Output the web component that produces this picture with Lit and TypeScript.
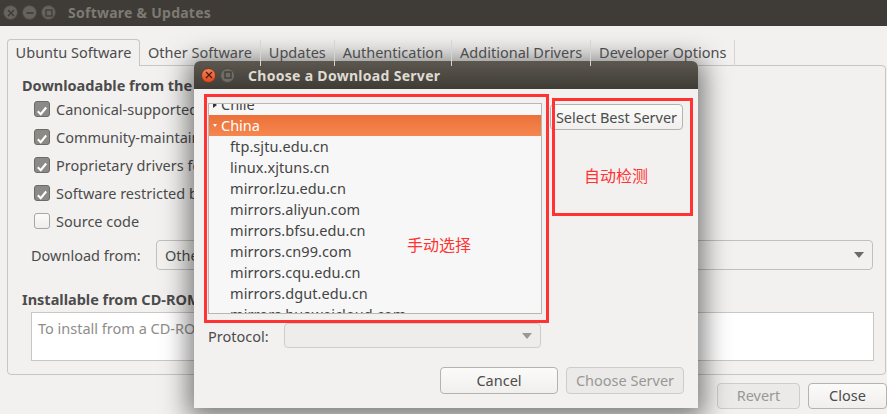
import { LitElement, html, css, svg } from "lit";
import { customElement } from "lit/decorators.js";

const CHECK = svg`<svg viewBox="0 0 16 16" width="14" height="14"><path d="M3.2 8.4 L6.5 11.6 L12.8 4" fill="none" stroke="#fff" stroke-width="2.4"/></svg>`;
const ARROW = svg`<svg viewBox="0 0 10 6" width="10" height="6"><path d="M0 0H10L5 6Z" fill="currentColor"/></svg>`;

const wbtn = (kind: string, glyph: unknown) => html`<span class="wb ${kind}">${glyph}</span>`;
const X = svg`<svg viewBox="0 0 8 8" width="8" height="8"><path d="M1 1L7 7M7 1L1 7" stroke="currentColor" stroke-width="1.2"/></svg>`;
const MIN = svg`<svg viewBox="0 0 8 8" width="8" height="8"><path d="M0.5 4H7.5" stroke="currentColor" stroke-width="1.5"/></svg>`;
const MAX = svg`<svg viewBox="0 0 8 8" width="8" height="8"><rect x="1" y="1" width="6" height="6" fill="none" stroke="currentColor" stroke-width="1.2"/></svg>`;

const CHECKS: [string, boolean][] = [
  ["Canonical-supported free and open-source software (main)", true],
  ["Community-maintained free and open-source software (universe)", true],
  ["Proprietary drivers for devices (restricted)", true],
  ["Software restricted by copyright or legal issues (multiverse)", true],
  ["Source code", false],
];
const TABS = ["Other Software", "Updates", "Authentication", "Additional Drivers", "Developer Options"];
const MIRRORS = [
  "ftp.sjtu.edu.cn", "linux.xjtuns.cn", "mirror.lzu.edu.cn", "mirrors.aliyun.com", "mirrors.bfsu.edu.cn",
  "mirrors.cn99.com", "mirrors.cqu.edu.cn", "mirrors.dgut.edu.cn", "mirrors.huaweicloud.com",
];

@customElement("app-root")
export class AppRoot extends LitElement {
  static styles = css`
    :host { display: block; width: 887px; height: 414px; overflow: hidden; position: relative; background: #f2f1f0;
      font-family: "Noto Sans", "Open Sans", sans-serif; font-size: 14.5px; color: #4c4c4c; }
    * { box-sizing: border-box; }
    .main { width: 887px; height: 414px; display: flex; flex-direction: column; overflow: hidden; }
    .titlebar { height: 26px; flex: none; background: #3f3c37; display: flex; align-items: center; padding-left: 3px; gap: 4px; padding-bottom: 1px; }
    .wb { width: 15px; height: 15px; border-radius: 50%; display: flex; align-items: center; justify-content: center;
      background: #66635e; color: #3a3833; border: 1px solid #4b4843; }
    .wb.close { background: linear-gradient(#f5845a, #e0491f); color: #5a2010; border-color: #7a3a22; }
    .wb.max { background: #6a6762; color: #35332f; }
    .t-title { margin-left: 8px; font-weight: 700; font-size: 14px; color: #7d7a74; letter-spacing: .25px; }
    .tabs { display: flex; height: 27px; margin: 13px 0 0 7px; flex: none; position: relative; z-index: 1; }
    .tab { padding: 0 8px 2px; height: 26px; margin-top: 1px; display: flex; align-items: center; border-right: 1px solid #d6d4d2; white-space: nowrap; }
    .tab.on { height: 27px; margin-top: 0; width: 133px; padding: 0 0 2px; justify-content: center; background: #f2f1f0; border: 1px solid #c8c6c3;
      border-bottom: none; border-radius: 4px 4px 0 0; }
    .panel { margin: -1px 1px 0 7px; height: 310px; border: 1px solid #c8c6c3; border-radius: 0 4px 4px 4px; padding: 9px 10px 0 14px; }
    .h { font-weight: 700; line-height: 20px; white-space: nowrap; }
    .cks { margin: 3px 0 0 12px; display: flex; flex-direction: column; gap: 7px; }
    .ck { display: flex; align-items: center; gap: 6px; height: 21px; white-space: nowrap; }
    .box { width: 16px; height: 16px; border-radius: 3px; border: 1px solid #a8a6a3; background: linear-gradient(#fbfbfa, #eeeded); flex: none; }
    .box.on { background: #8c8a87; border-color: #6c6a67; }
    .dl { display: flex; align-items: center; margin: 9px 0 0 9px; height: 30px; }
    .dl-l { width: 125px; flex: none; }
    .combo { height: 30px; flex: 1; margin-right: 2px; border: 1px solid #c2c0bd; border-radius: 4px; background: #f2f1f0; display: flex; align-items: center;
      justify-content: space-between; padding: 0 8px; color: #4c4c4c; }
    .combo svg { color: #6b6b6b; }
    .h2 { margin-top: 19px; }
    .cd { margin: 3px 0 0 9px; width: 843px; height: 49px; background: #fff; border: 1px solid #c9c7c4; padding: 5px 6px; color: #8f8d8a; }
    .foot { display: flex; justify-content: flex-end; gap: 8px; margin-top: 8px; }
    .btn { height: 26px; border: 1px solid #b5b3b0; border-radius: 4px; background: linear-gradient(#fbfbfa, #f0efee); display: flex; align-items: center;
      justify-content: center; color: #4c4c4c; white-space: nowrap; }
    .foot .btn, .d-foot .btn { padding-bottom: 2px; }
    .btn.dis { background: #ebeae9; border-color: #cfcdca; color: #9a9895; }
    .revert { width: 83px; }
    .close-b { width: 79px; }
    .dialog { position: absolute; left: 194px; top: 61px; width: 504px; height: 347px; background: #f2f1f0; border-radius: 6px 6px 0 0;
      box-shadow: 0 4px 26px 6px rgba(0,0,0,.5); display: flex; flex-direction: column; }
    .d-bar { height: 28px; flex: none; border-radius: 6px 6px 0 0; background: linear-gradient(#5c5850, #3f3c36); display: flex; align-items: center; padding-left: 7px; gap: 4px; }
    .d-bar .wb { background: #6f6c66; color: #3a3833; }
    .d-bar .wb.close { background: linear-gradient(#f5845a, #e0491f); color: #4a1a0c; }
    .d-title { margin-left: 9px; font-weight: 700; font-size: 14px; color: #dfdbd2; letter-spacing: .3px; }
    .d-body { flex: 1; display: flex; flex-direction: column; padding: 14px 14px 14px 14px; }
    .d-top { display: flex; gap: 8px; height: 211px; }
    .list { width: 334px; height: 211px; border: 1px solid #b9b7b4; background: #f7f7f7; overflow: hidden; flex: none; }
    .list-in { margin-top: -10px; }
    .row { height: 21px; line-height: 21px; padding-left: 22px; white-space: nowrap; color: #444; position: relative; }
    .row.parent { padding-left: 4px; display: flex; align-items: center; gap: 4px; }
    .row.sel { background: linear-gradient(#ec7039, #f5874f); color: #fff; }
    .tri { width: 0; height: 0; border-left: 4px solid #333; border-top: 3px solid transparent; border-bottom: 3px solid transparent; }
    .tri2 { width: 0; height: 0; border-top: 3px solid #fff; border-left: 2px solid transparent; border-right: 2px solid transparent; }
    .row.child { padding-left: 21px; letter-spacing: .08px; }
    .best { width: 133px; height: 26px; margin-top: 1px; }
    .proto { display: flex; align-items: center; margin-top: 9px; height: 25px; }
    .proto-l { width: 76px; flex: none; }
    .proto .combo { width: 257px; flex: none; height: 25px; background: #eeedec; border-color: #cfcdca; margin: 0; }
    .proto svg { color: #9a9895; }
    .d-foot { display: flex; justify-content: flex-end; gap: 8px; margin-top: 19px; }
    .d-foot .btn { width: 118px; height: 27px; }
    .mark { position: absolute; border: 3px solid #ff3333; pointer-events: none; }
    .m1 { left: 204px; top: 94px; width: 345px; height: 229px; }
    .m2 { left: 552px; top: 98px; width: 141px; height: 118px; }
    .note { position: absolute; color: #ff3333; font-family: "Noto Sans CJK SC", sans-serif; font-size: 16px; line-height: 20px; white-space: nowrap; }
    .n1 { left: 407px; top: 234px; }
    .n2 { left: 584px; top: 165px; }
  `;

  render() {
    return html`
      <div class="main">
        <div class="titlebar">
          ${wbtn("", X)}${wbtn("", MIN)}${wbtn("", MAX)}
          <span class="t-title">Software &amp; Updates</span>
        </div>
        <div class="tabs">
          <div class="tab on">Ubuntu Software</div>
          ${TABS.map((t) => html`<div class="tab">${t}</div>`)}
        </div>
        <div class="panel">
          <div class="h">Downloadable from the Internet</div>
          <div class="cks">
            ${CHECKS.map(([t, on]) => html`<div class="ck"><span class="box ${on ? "on" : ""}">${on ? CHECK : ""}</span>${t}</div>`)}
          </div>
          <div class="dl"><span class="dl-l">Download from:</span><div class="combo"><span>Other...</span>${ARROW}</div></div>
          <div class="h h2">Installable from CD-ROM/DVD</div>
          <div class="cd">To install from a CD-ROM or DVD, insert the medium into the drive.</div>
        </div>
        <div class="foot">
          <div class="btn dis revert">Revert</div>
          <div class="btn close-b">Close</div>
        </div>
      </div>
      <div class="dialog">
        <div class="d-bar">
          ${wbtn("close", X)}${wbtn("max", MAX)}
          <span class="d-title">Choose a Download Server</span>
        </div>
        <div class="d-body">
          <div class="d-top">
            <div class="list">
              <div class="list-in">
                <div class="row parent"><span class="tri"></span>Chile</div>
                <div class="row parent sel"><span class="tri2"></span>China</div>
                ${MIRRORS.map((m) => html`<div class="row child">${m}</div>`)}
              </div>
            </div>
            <div class="btn best">Select Best Server</div>
          </div>
          <div class="proto"><span class="proto-l">Protocol:</span><div class="combo"><span></span>${ARROW}</div></div>
          <div class="d-foot">
            <div class="btn">Cancel</div>
            <div class="btn dis">Choose Server</div>
          </div>
        </div>
      </div>
      <div class="mark m1"></div>
      <div class="mark m2"></div>
      <div class="note n1">手动选择</div>
      <div class="note n2">自动检测</div>
    `;
  }
}
